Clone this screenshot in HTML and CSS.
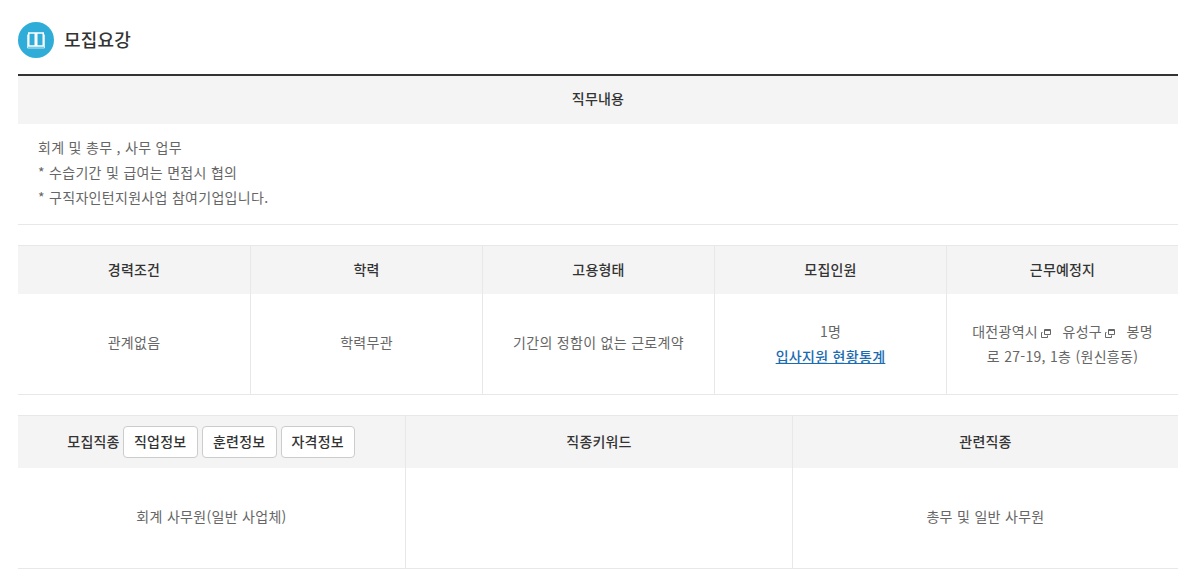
FILE: index.html
```html
<!DOCTYPE html>
<html lang="ko">
<head>
<meta charset="utf-8">
<title>모집요강</title>
<link rel="stylesheet" href="styles.css">
</head>
<body>
<main class="page">
  <header class="title">
    <span class="title-icon">
      <svg width="18" height="17" viewBox="0 0 18 17" fill="none" stroke="#fff">
        <path d="M1.750 1h6.500v13h-6.500zM9.750 1h6.500v13h-6.500z" stroke-width="1.500"/>
        <path d="M.5 2.500v13.500h17v-13.500" stroke-width="1" opacity=".75"/>
      </svg>
    </span>
    <h2>모집요강</h2>
  </header>

  <section class="duty">
    <h3 class="duty-head">직무내용</h3>
    <div class="duty-body">
      <p>회계 및 총무 , 사무 업무</p>
      <p>* 수습기간 및 급여는 면접시 협의</p>
      <p>* 구직자인턴지원사업 참여기업입니다.</p>
    </div>
  </section>

  <div class="grid grid-five">
    <div class="th">경력조건</div>
    <div class="th">학력</div>
    <div class="th">고용형태</div>
    <div class="th">모집인원</div>
    <div class="th">근무예정지</div>
    <div class="td">관계없음</div>
    <div class="td">학력무관</div>
    <div class="td">기간의 정함이 없는 근로계약</div>
    <div class="td two-line"><span>1명</span><br><a href="#">입사지원 현황통계</a></div>
    <div class="td two-line">대전광역시<svg class="ext" width="10" height="9" viewBox="0 0 10 9" fill="none" stroke="#666"><path d="M3.500.5h6v5h-6zM3.500 1.500h6" /><path d="M1.500 3.500h-1v5h6v-2"/></svg>&nbsp; 유성구<svg class="ext" width="10" height="9" viewBox="0 0 10 9" fill="none" stroke="#666"><path d="M3.500.5h6v5h-6zM3.500 1.500h6" /><path d="M1.500 3.500h-1v5h6v-2"/></svg>&nbsp; 봉명로 27-19, 1층 (원신흥동)</div>
  </div>

  <div class="grid grid-three">
    <div class="th tall">모집직종 <button>직업정보</button> <button>훈련정보</button> <button>자격정보</button></div>
    <div class="th tall">직종키워드</div>
    <div class="th tall">관련직종</div>
    <div class="td">회계 사무원(일반 사업체)</div>
    <div class="td"></div>
    <div class="td">총무 및 일반 사무원</div>
  </div>
</main>
</body>
</html>
```

FILE: styles.css
```css
* { box-sizing: border-box; }
html, body { margin: 0; background: #fff; }
body {
  font-family: "Noto Sans CJK KR", "Noto Sans", sans-serif;
  font-size: 14px;
  color: #666;
  overflow: hidden;
}
.page { width: 1160px; margin-left: 18px; padding-top: 22px; }
.title { display: flex; align-items: center; gap: 10px; height: 36px; margin-bottom: 16px; }
.title-icon {
  width: 36px; height: 36px; border-radius: 50%;
  background: #2fadd8;
  display: flex; align-items: center; justify-content: center;
}
.title h2 { margin: 0 0 2px; font-size: 18px; font-weight: 500; color: #333; line-height: 34px; letter-spacing: .2px; }
.duty { border-top: 2px solid #333; border-bottom: 1px solid #e8e8e8; height: 151px; }
.duty-head {
  margin: 0; height: 48px; line-height: 44px; background: #f4f4f4;
  text-align: center; font-size: 14px; font-weight: 500; color: #333; letter-spacing: .2px;
}
.duty-body { padding: 11px 20px; letter-spacing: .3px; }
.duty-body p { margin: 0; line-height: 25px; }
.grid { display: grid; border-top: 1px solid #e8e8e8; border-bottom: 1px solid #e8e8e8; margin-top: 20px; }
.grid-five { grid-template-columns: repeat(5, 1fr); grid-template-rows: 48px 100px; }
.grid-three { grid-template-columns: 387px 387px 386px; grid-template-rows: 52px 100px; }
.th {
  background: #f4f4f4; color: #333; font-weight: 500; text-align: center;
  display: flex; align-items: center; justify-content: center; gap: 3px;
  border-left: 1px solid #e8e8e8; letter-spacing: .2px; padding-bottom: 3px;
}
.th.tall:first-child { padding-right: 1px; }
.td {
  text-align: center; line-height: 25px; padding: 0 20px 3px;
  align-content: center; letter-spacing: .3px;
  border-left: 1px solid #e8e8e8;
}
.td.two-line { padding-bottom: 1px; }
.th:nth-child(1), .grid-five .td:nth-child(6), .grid-three .td:nth-child(4) { border-left: 0; }
.td a { color: #1a6bb0; font-weight: 500; text-decoration: underline; }
.ext { margin: 0 3px; vertical-align: -1px; }
.th button {
  font: inherit; font-weight: 500; color: #333; background: #fff; letter-spacing: .2px;
  border: 1px solid #ccc; border-radius: 4px;
  height: 32px; padding: 0 0 2px; width: 75px; margin: 3px 0 0 1px;
}
.th button:first-of-type { margin-left: 0; }
.th button:last-child { width: 74px; }
```
